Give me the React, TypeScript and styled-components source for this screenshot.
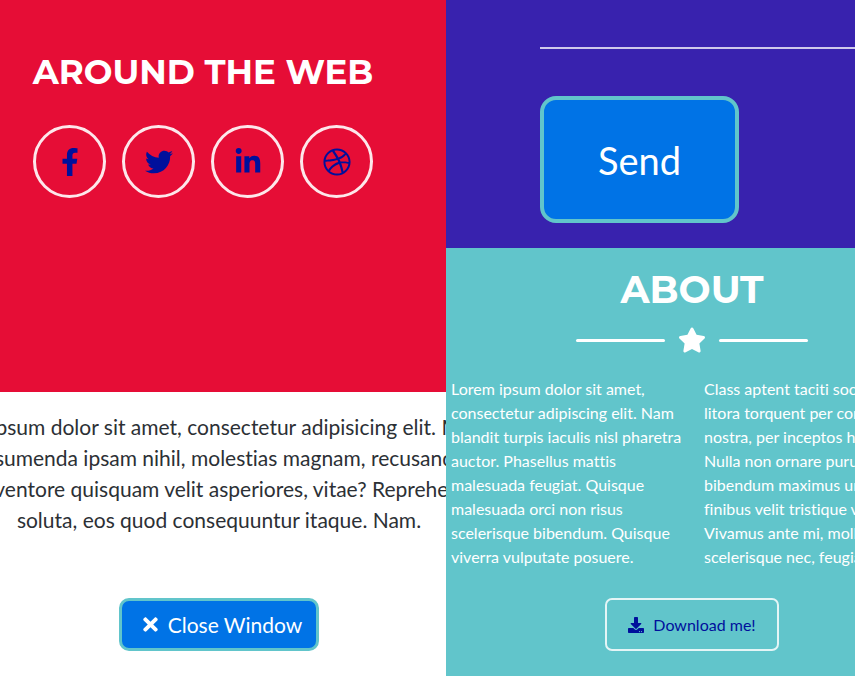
import React from "react";
import styled, { createGlobalStyle } from "styled-components";
import {
  FaDownload,
  FaDribbble,
  FaFacebookF,
  FaLinkedinIn,
  FaStar,
  FaTimes,
  FaTwitter,
} from "react-icons/fa";

const color = {
  red: "#e60d36",
  purple: "#3822ae",
  teal: "#61c5cb",
  blue: "#0073e6",
  navy: "#00109c",
  ink: "#2c3035",
  white: "#ffffff",
};

const GlobalStyle = createGlobalStyle`
  *, *::before, *::after { box-sizing: border-box; }
  body {
    margin: 0;
    font-family: Lato, "Liberation Sans", sans-serif;
    font-variant-ligatures: none;
    background: ${color.white};
  }
  h2, p { margin: 0; }
`;

const Page = styled.main`
  display: grid;
  grid-template-columns: minmax(0, 446fr) minmax(0, 409fr);
  min-height: 100vh;
`;

const Column = styled.div`
  display: flex;
  flex-direction: column;
  min-width: 0;
`;

const Panel = styled.section<{ $bg: string; $pad: string; $grow?: boolean }>`
  background: ${(p) => p.$bg};
  padding: ${(p) => p.$pad};
  flex: ${(p) => (p.$grow ? "1 0 auto" : "0 0 auto")};
  overflow: hidden;
`;

const Heading = styled.h2<{ $size: number }>`
  font-family: Montserrat, Inter, sans-serif;
  font-size: ${(p) => p.$size}px;
  line-height: 44px;
  font-weight: 700;
  color: ${color.white};
  text-transform: uppercase;
  text-align: center;
  white-space: nowrap;
`;

const SocialGroup = styled.div`
  display: flex;
  flex-direction: column;
  align-items: center;
  gap: 31px;
  width: 340px;
`;

const SocialList = styled.nav`
  display: flex;
  gap: 16px;
`;

const SocialLink = styled.a`
  display: flex;
  align-items: center;
  justify-content: center;
  width: 73px;
  height: 73px;
  border: 3px solid #fde7eb;
  border-radius: 50%;
  color: ${color.navy};
  font-size: 28px;
`;

const Message = styled.p`
  display: flex;
  flex-direction: column;
  align-items: center;
  font-size: 21px;
  line-height: 31px;
  color: ${color.ink};
  white-space: nowrap;
`;

const Actions = styled.div<{ $top: number }>`
  display: flex;
  justify-content: center;
  margin-top: ${(p) => p.$top}px;
`;

const Button = styled.button`
  display: inline-flex;
  align-items: center;
  justify-content: center;
  font-family: inherit;
  font-variant-ligatures: inherit;
  color: ${color.white};
  background: ${color.blue};
  border: 3px solid ${color.teal};
  cursor: pointer;
`;

const CloseButton = styled(Button)`
  gap: 7px;
  height: 53px;
  padding: 0 14px 0 18px;
  border-radius: 10px;
  font-size: 21px;
`;

const SendButton = styled(Button)`
  height: 127px;
  padding: 0 54px;
  border-width: 4px;
  border-radius: 16px;
  font-size: 38px;
`;

const DownloadLink = styled.a`
  display: inline-flex;
  align-items: center;
  gap: 9px;
  height: 53px;
  padding: 0 21px;
  border: 2px solid #e4f5f6;
  border-radius: 7px;
  color: ${color.navy};
  font-size: 16px;
  text-decoration: none;
`;

const Rule = styled.hr`
  height: 2px;
  margin: 0 0 47px;
  border: 0;
  background: #cfc9eb;
`;

const AboutContent = styled.div`
  width: 482px;
`;

const Divider = styled.div`
  display: flex;
  align-items: center;
  justify-content: center;
  gap: 13px;
  margin-top: 14px;
  color: ${color.white};
  font-size: 28px;
`;

const DividerLine = styled.span`
  width: 89px;
  height: 3px;
  border-radius: 2px;
  background: ${color.white};
`;

const TextColumns = styled.div`
  display: grid;
  grid-template-columns: repeat(2, minmax(0, 1fr));
  gap: 24px;
  margin-top: 23px;
`;

const AboutText = styled.p`
  display: flex;
  flex-direction: column;
  font-size: 16px;
  line-height: 24px;
  color: ${color.white};
  white-space: nowrap;
`;

const socials = [
  { label: "Facebook", Icon: FaFacebookF },
  { label: "Twitter", Icon: FaTwitter },
  { label: "LinkedIn", Icon: FaLinkedinIn },
  { label: "Dribbble", Icon: FaDribbble },
];

const message = [
  "Lorem ipsum dolor sit amet, consectetur adipisicing elit. Mollitia",
  "neque assumenda ipsam nihil, molestias magnam, recusandae quos",
  "quis inventore quisquam velit asperiores, vitae? Reprehenderit",
  "soluta, eos quod consequuntur itaque. Nam.",
];

const aboutLeft = [
  "Lorem ipsum dolor sit amet,",
  "consectetur adipiscing elit. Nam",
  "blandit turpis iaculis nisl pharetra",
  "auctor. Phasellus mattis",
  "malesuada feugiat. Quisque",
  "malesuada orci non risus",
  "scelerisque bibendum. Quisque",
  "viverra vulputate posuere.",
];

const aboutRight = [
  "Class aptent taciti sociosqu ad",
  "litora torquent per conubia",
  "nostra, per inceptos himenaeos.",
  "Nulla non ornare purus. Donec",
  "bibendum maximus urna, at",
  "finibus velit tristique vel.",
  "Vivamus ante mi, mollis ac",
  "scelerisque nec, feugiat id.",
];

const lines = (items: string[]) => items.map((t) => <span key={t}>{t}</span>);

export default function App() {
  return (
    <>
      <GlobalStyle />
      <Page>
        <Column>
          <Panel $bg={color.red} $pad="50px 0 194px 33px">
            <SocialGroup>
              <Heading $size={34}>Around the Web</Heading>
              <SocialList aria-label="Social">
                {socials.map(({ label, Icon }) => (
                  <SocialLink key={label} href="#" aria-label={label}>
                    <Icon />
                  </SocialLink>
                ))}
              </SocialList>
            </SocialGroup>
          </Panel>
          <Panel $bg={color.white} $pad="19px 8px 24px 0" $grow>
            <Message>{lines(message)}</Message>
            <Actions $top={63}>
              <CloseButton type="button">
                <FaTimes />
                Close Window
              </CloseButton>
            </Actions>
          </Panel>
        </Column>
        <Column>
          <Panel $bg={color.purple} $pad="47px 0 25px 94px">
            <Rule />
            <SendButton type="submit">Send</SendButton>
          </Panel>
          <Panel $bg={color.teal} $pad="20px 0 24px 5px" $grow>
            <AboutContent>
              <Heading $size={38}>About</Heading>
              <Divider>
                <DividerLine />
                <FaStar />
                <DividerLine />
              </Divider>
              <TextColumns>
                <AboutText>{lines(aboutLeft)}</AboutText>
                <AboutText>{lines(aboutRight)}</AboutText>
              </TextColumns>
              <Actions $top={29}>
                <DownloadLink href="#">
                  <FaDownload />
                  Download me!
                </DownloadLink>
              </Actions>
            </AboutContent>
          </Panel>
        </Column>
      </Page>
    </>
  );
}
